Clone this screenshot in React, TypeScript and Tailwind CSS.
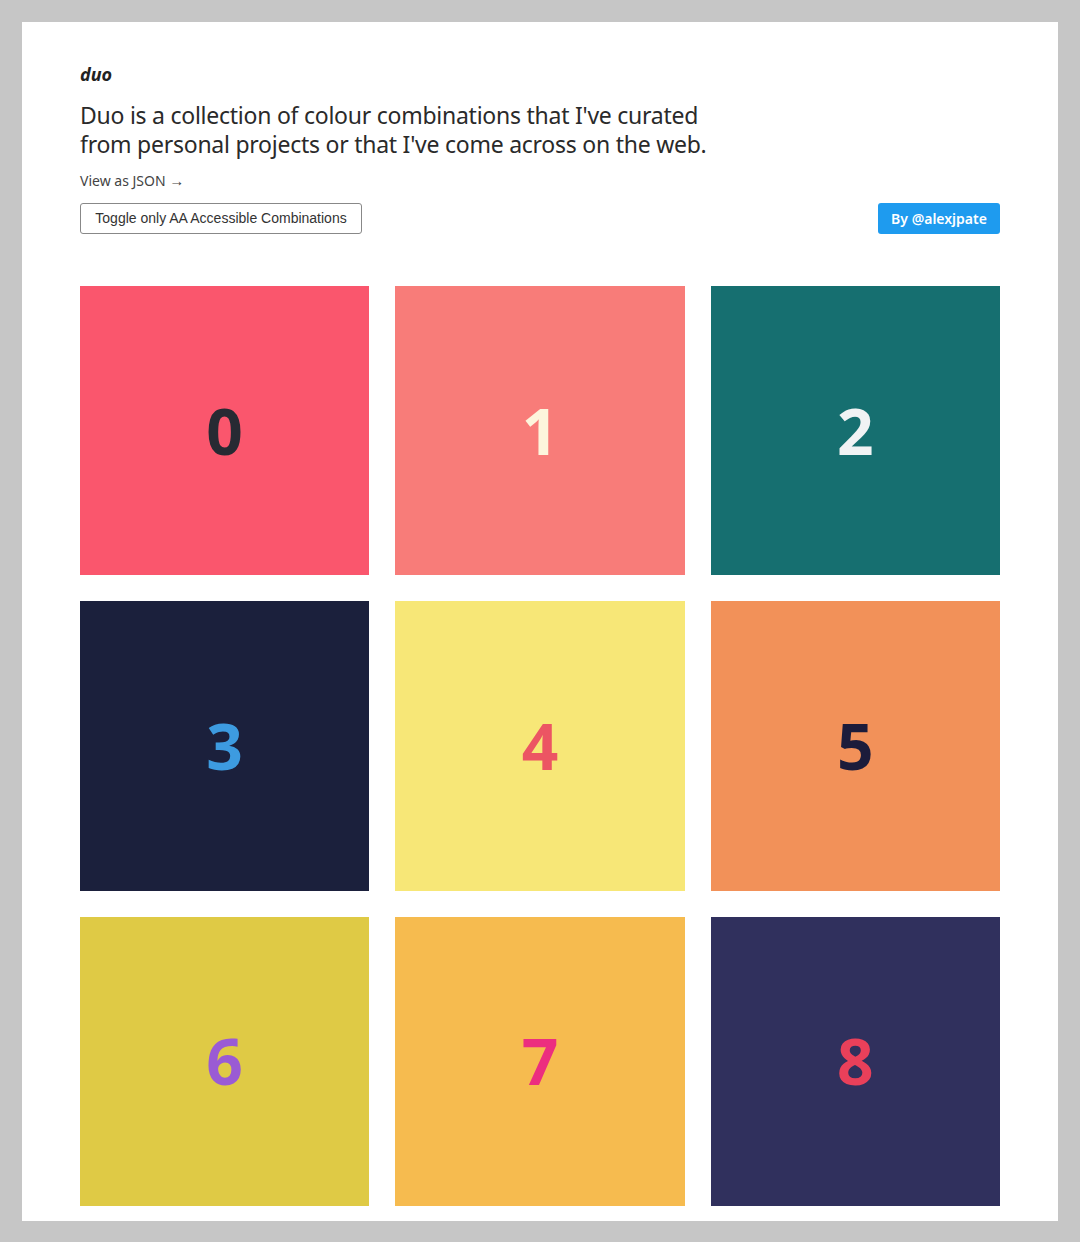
const combos = [
  { bg: 'bg-[#fa566d]', fg: 'text-[#272a33]' },
  { bg: 'bg-[#f87c79]', fg: 'text-[#fdf5dc]' },
  { bg: 'bg-[#166f70]', fg: 'text-[#f1f3f4]' },
  { bg: 'bg-[#1b203c]', fg: 'text-[#3d9be0]' },
  { bg: 'bg-[#f7e777]', fg: 'text-[#ec5563]' },
  { bg: 'bg-[#f29159]', fg: 'text-[#1c1c3b]' },
  { bg: 'bg-[#dfca45]', fg: 'text-[#9a5bd4]' },
  { bg: 'bg-[#f6bb4f]', fg: 'text-[#ec2e7f]' },
  { bg: 'bg-[#30305d]', fg: 'text-[#e9405a]' }
];

export default function App() {
  return (
    <div className="min-h-[1242px] w-[1080px] bg-[#c6c6c6] px-[22px] pt-[22px] pb-[21px]">
      <div className="bg-white px-[58px] pt-[40px] pb-[15px] font-['Noto_Sans','Open_Sans',sans-serif] text-[#222]">
        {/* header */}
        <h1 className="text-[18px] font-bold italic leading-[24px]">duo</h1>
        <p className="mt-[15px] w-[660px] text-[23px] leading-[29px] tracking-[-0.25px] text-[#2a2a2a]">
          Duo is a collection of colour combinations that I've curated from personal projects or that I've come across on the web.
        </p>
        <a className="mt-[12px] block text-[14px] leading-[18px] text-[#444]">
          View as JSON <span className="text-[15px]">→</span>
        </a>
        <div className="mt-[13px] flex items-center justify-between">
          <button className="h-[31px] w-[282px] rounded-[3px] border border-[#888] font-['Liberation_Sans',Arial,sans-serif] text-[14px] text-[#333]">
            Toggle only AA Accessible Combinations
          </button>
          <button className="h-[31px] w-[122px] rounded-[3px] bg-[#1e9bef] text-[14px] font-semibold text-white">
            By @alexjpate
          </button>
        </div>

        {/* swatches */}
        <div className="mt-[52px] grid grid-cols-3 gap-x-[26px] gap-y-[26px]">
          {combos.map((c, i) => (
            <div key={i} className={`flex aspect-square items-center justify-center ${c.bg}`}>
              <span className={`text-[64px] font-bold leading-none ${c.fg}`}>{i}</span>
            </div>
          ))}
        </div>
      </div>
    </div>
  );
}
